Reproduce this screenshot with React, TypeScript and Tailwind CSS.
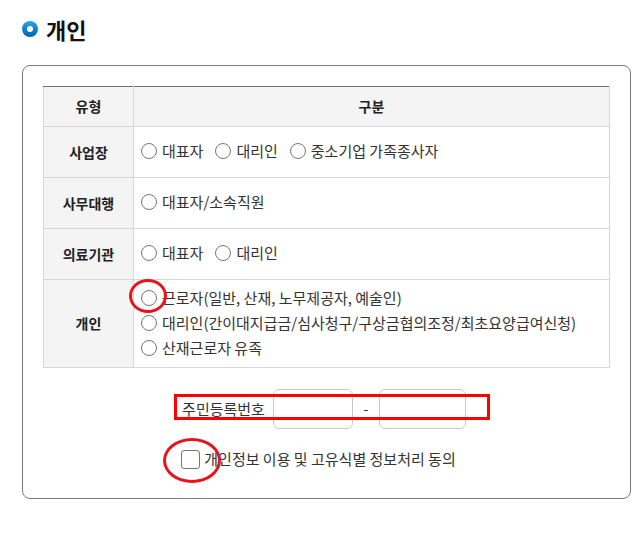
const FONT = "font-['Noto_Sans_CJK_KR','Noto_Sans',sans-serif]";

function Radio({ label }: { label: string }) {
  return (
    <label className="inline-flex items-center gap-[5px]">
      <span className="inline-block h-[16px] w-[16px] shrink-0 rounded-full border border-[#767676] bg-white" />
      <span>{label}</span>
    </label>
  );
}

const rows: { type: string; options: string[]; stacked?: boolean }[] = [
  { type: "사업장", options: ["대표자", "대리인", "중소기업 가족종사자"] },
  { type: "사무대행", options: ["대표자/소속직원"] },
  { type: "의료기관", options: ["대표자", "대리인"] },
  {
    type: "개인",
    stacked: true,
    options: [
      "근로자(일반, 산재, 노무제공자, 예술인)",
      "대리인(간이대지급금/심사청구/구상금협의조정/최초요양급여신청)",
      "산재근로자 유족",
    ],
  },
];

export default function App() {
  return (
    <div className={`relative min-h-[541px] w-full bg-white text-[15px] text-[#333] ${FONT}`}>
      <div className="flex items-center gap-[8px] pl-[22px] pt-[14px]">
        <span className="flex h-[16px] w-[16px] items-center justify-center rounded-full bg-gradient-to-b from-[#25a7ea] to-[#0062b0]">
          <span className="h-[6px] w-[6px] rounded-full bg-white" />
        </span>
        <h2 className="text-[22px] font-bold leading-[30px] text-[#111]">개인</h2>
      </div>

      <div className="ml-[22px] mt-[21px] w-[609px] rounded-[8px] border border-[#7a7a7a] px-[20px] pb-[28px] pt-[20px]">
        <table className="w-[567px] border-collapse border-t border-t-[#6b6f76]">
          <thead>
            <tr className="h-[40px] bg-[#f4f4f4]">
              <th className="w-[90px] border border-[#d6d6d6] border-t-[#6b6f76] text-[14px] font-bold text-[#222]">유형</th>
              <th className="border border-[#d6d6d6] border-t-[#6b6f76] text-[14px] font-bold text-[#222]">구분</th>
            </tr>
          </thead>
          <tbody>
            {rows.map((r) => (
              <tr key={r.type} className={r.stacked ? "h-[88px]" : "h-[51px]"}>
                <th className="border border-[#d6d6d6] bg-[#f4f4f4] text-[14px] font-bold text-[#222]">{r.type}</th>
                <td className="border border-[#d6d6d6] px-[7px] pb-[2px]">
                  {r.stacked ? (
                    <div className="flex flex-col gap-[4px] leading-[21px]">
                      {r.options.map((o) => (
                        <Radio key={o} label={o} />
                      ))}
                    </div>
                  ) : (
                    <div className="flex items-center gap-[12px]">
                      {r.options.map((o) => (
                        <Radio key={o} label={o} />
                      ))}
                    </div>
                  )}
                </td>
              </tr>
            ))}
          </tbody>
        </table>

        <div className="mt-[21px] flex items-center justify-center pr-[5px]">
          <span className="mr-[8px]">주민등록번호</span>
          <input className="h-[40px] w-[80px] rounded-[6px] border border-[#c9c9c9]" />
          <span className="w-[26px] text-center">-</span>
          <input className="h-[40px] w-[87px] rounded-[6px] border border-[#c9c9c9]" />
        </div>

        <label className="mt-[19px] flex h-[22px] items-center justify-center gap-[4px] pr-[16px]">
          <span className="inline-block h-[19px] w-[19px] rounded-[3px] border border-[#767676] bg-white" />
          <span>개인정보 이용 및 고유식별 정보처리 동의</span>
        </label>
      </div>

      {/* red markup */}
      <div className="pointer-events-none absolute left-[129px] top-[279px] h-[34px] w-[38px] rounded-[50%] border-[3px] border-[#e8141a]" />
      <div className="pointer-events-none absolute left-[174px] top-[394px] h-[26px] w-[316px] border-[3px] border-[#f00]" />
      <div className="pointer-events-none absolute left-[163px] top-[438px] h-[45px] w-[58px] rounded-[50%] border-[3px] border-[#e8141a]" />
    </div>
  );
}
